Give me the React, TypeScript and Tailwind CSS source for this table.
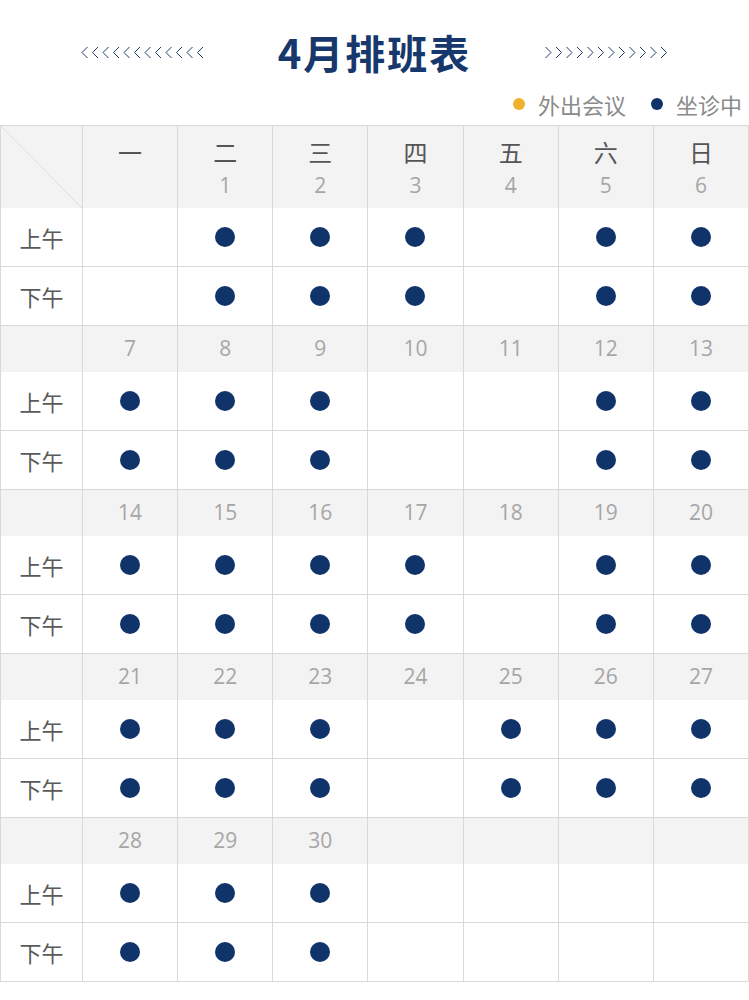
const NAVY = "bg-[#10336a]"

type Week = {
  dates: (number | null)[]
  on: boolean[]
}

const weeks: Week[] = [
  { dates: [null, 1, 2, 3, 4, 5, 6], on: [false, true, true, true, false, true, true] },
  { dates: [7, 8, 9, 10, 11, 12, 13], on: [true, true, true, false, false, true, true] },
  { dates: [14, 15, 16, 17, 18, 19, 20], on: [true, true, true, true, false, true, true] },
  { dates: [21, 22, 23, 24, 25, 26, 27], on: [true, true, true, false, true, true, true] },
  { dates: [28, 29, 30, null, null, null, null], on: [true, true, true, false, false, false, false] },
]

const weekdays = ["一", "二", "三", "四", "五", "六", "日"]

const Chevrons = ({ dir }: { dir: "left" | "right" }) => {
  const xs = Array.from({ length: 12 }, (_, i) => i * 10.5)
  return (
    <svg width="126" height="13" viewBox="0 0 126 13" className="shrink-0">
      {xs.map((x) => (
        <path
          key={x}
          d={dir === "left" ? `M${x + 7.5} 1 L${x + 2} 6.5 L${x + 7.5} 12` : `M${x + 2.5} 1 L${x + 8} 6.5 L${x + 2.5} 12`}
          fill="none"
          stroke="#1b3a6b"
          strokeWidth="1"
        />
      ))}
    </svg>
  )
}

const Dot = () => <span className={`block w-5 h-5 rounded-full ${NAVY}`} />

const Label = ({ text }: { text: string }) => (
  <div className="h-[59px] border-r border-b border-[#d9d9d9] flex items-center justify-center text-[22px] text-[#5a5a5a]">
    {text}
  </div>
)

const SlotRow = ({ label, on }: { label: string, on: boolean[] }) => (
  <>
    <Label text={label} />
    {on.map((v, i) => (
      <div key={i} className="h-[59px] border-r border-b border-[#d9d9d9] flex items-center justify-center">
        {v && <Dot />}
      </div>
    ))}
  </>
)

const DateRow = ({ dates }: { dates: (number | null)[] }) => (
  <>
    <div className="h-[46px] bg-[#f3f3f3] border-r border-[#d9d9d9]" />
    {dates.map((d, i) => (
      <div
        key={i}
        className="h-[46px] bg-[#f3f3f3] border-r border-[#d9d9d9] flex items-center justify-center text-[21px] text-[#a6a6a6] font-['Open_Sans','Noto_Sans_CJK_SC',sans-serif]"
      >
        {d ?? ""}
      </div>
    ))}
  </>
)

const HeaderRow = () => (
  <>
    <div className="relative h-[82px] bg-[#f3f3f3] border-r border-[#d9d9d9]">
      <svg className="absolute inset-0 w-full h-full" viewBox="0 0 81 82" preserveAspectRatio="none">
        <line x1="0" y1="0" x2="81" y2="82" stroke="#dcdcdc" strokeWidth="1" />
      </svg>
    </div>
    {weekdays.map((w, i) => (
      <div key={w} className="h-[82px] bg-[#f3f3f3] border-r border-[#d9d9d9] flex flex-col items-center pt-[10px]">
        <span className="text-[24px] leading-[32px] text-[#555]">{w}</span>
        <span className="mt-[2px] text-[21px] leading-[30px] text-[#a6a6a6] font-['Open_Sans','Noto_Sans_CJK_SC',sans-serif]">
          {weeks[0].dates[i] ?? ""}
        </span>
      </div>
    ))}
  </>
)

const App = () => {
  return (
    <div className="w-[749px] bg-white font-['Noto_Sans_CJK_SC','Noto_Sans',sans-serif]">
      <div className="mt-[12px] h-[80px] flex items-center justify-center gap-[72px]">
        <Chevrons dir="left" />
        <h1 className="text-[40px] leading-none font-bold text-[#17386c] tracking-[2px]">4月排班表</h1>
        <Chevrons dir="right" />
      </div>
      <div className="h-[24px] flex items-center justify-end pr-[7px] text-[22px] text-[#8a8a8a]">
        <span className="w-3 h-3 rounded-full bg-[#f0b12c]" />
        <span className="ml-[13px]">外出会议</span>
        <span className={`ml-[25px] w-3 h-3 rounded-full ${NAVY}`} />
        <span className="ml-[13px]">坐诊中</span>
      </div>
      <div className="mt-[9px] grid grid-cols-[82px_repeat(7,1fr)] border-l border-t border-[#d9d9d9]">
        <HeaderRow />
        {weeks.map((wk, i) => (
          <div key={i} className="contents">
            {i > 0 && <DateRow dates={wk.dates} />}
            <SlotRow label="上午" on={wk.on} />
            <SlotRow label="下午" on={wk.on} />
          </div>
        ))}
      </div>
    </div>
  )
}

export default App
